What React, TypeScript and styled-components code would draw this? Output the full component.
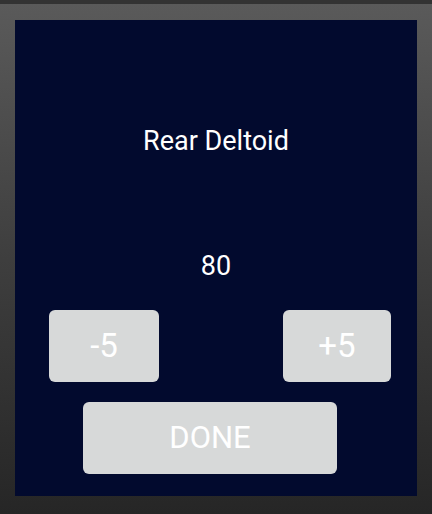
import React, { useState } from "react";
import styled, { createGlobalStyle } from "styled-components";

const GlobalStyle = createGlobalStyle`
  html, body {
    margin: 0;
    padding: 0;
    width: 432px;
    height: 514px;
    overflow: hidden;
  }
  body {
    font-family: Roboto, "Liberation Sans", sans-serif;
  }
`;

const Frame = styled.div`
  box-sizing: border-box;
  width: 432px;
  height: 514px;
  padding: 20px 15px 18px 15px;
  background: linear-gradient(
    to bottom,
    #333333 0px,
    #333333 4px,
    #5a5a5a 4px,
    #3e3e3e 260px,
    #262626 100%
  );
`;

const Panel = styled.div`
  display: flex;
  flex-direction: column;
  height: 100%;
  background: #020a2e;
`;

const Label = styled.div<{ $gap: number }>`
  margin-top: ${({ $gap }) => $gap}px;
  height: 30px;
  line-height: 30px;
  font-size: 27px;
  color: #ffffff;
  text-align: center;
`;

const StepRow = styled.div`
  display: flex;
  justify-content: space-between;
  margin-top: 29px;
  padding: 0 26px 0 34px;
`;

const Button = styled.button<{ $width: number; $size: number }>`
  width: ${({ $width }) => $width}px;
  height: 72px;
  padding: 0;
  border: none;
  border-radius: 6px;
  background: #d7d9d9;
  color: #ffffff;
  font-family: Roboto, "Liberation Sans", sans-serif;
  font-size: ${({ $size }) => $size}px;
  line-height: 72px;
  cursor: pointer;
`;

const DoneButton = styled(Button)`
  margin: 20px 0 0 68px;
`;

const App: React.FC = () => {
    const [weight, setWeight] = useState(80);

    return (
        <>
            <GlobalStyle />
            <Frame>
                <Panel>
                    <Label $gap={106}>Rear Deltoid</Label>
                    <Label $gap={95}>{weight}</Label>
                    <StepRow>
                        <Button $width={110} $size={33} onClick={() => setWeight(weight - 5)}>
                            -5
                        </Button>
                        <Button $width={108} $size={33} onClick={() => setWeight(weight + 5)}>
                            +5
                        </Button>
                    </StepRow>
                    <DoneButton $width={254} $size={31}>DONE</DoneButton>
                </Panel>
            </Frame>
        </>
    );
};

export default App;
